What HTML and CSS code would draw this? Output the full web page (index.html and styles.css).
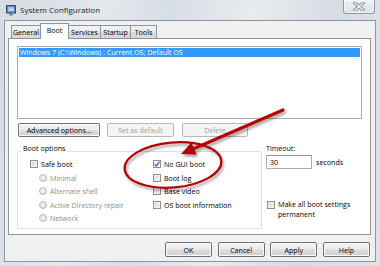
FILE: index.html
```html
<!doctype html>
<html lang="en">
  <head>
    <meta charset="UTF-8" />
    <title>System Configuration</title>
    <link rel="stylesheet" href="styles.css">
  </head>
  <body>
    <div class="window">
      <div class="title-bar">
        <svg class="app-icon" width="11" height="11" viewBox="0 0 11 11">
          <rect x="0.5" y="0.5" width="9" height="7.5" fill="#5e7fc4" stroke="#3d4b66" />
          <rect x="2" y="2" width="6" height="4.5" fill="#9fc0f0" />
          <path d="M3 6 L5 4 L8 5" fill="none" stroke="#ffffff" stroke-width="0.8" />
          <rect x="3" y="8.5" width="4" height="2" fill="#7d8796" />
        </svg>
        <span class="title">System Configuration</span>
        <div class="close-btn">
          <svg width="12" height="9" viewBox="0 0 12 9">
            <path d="M2 1 L10 8 M10 1 L2 8" stroke="#8a8f96" stroke-width="3.2" stroke-linecap="square" />
            <path d="M2 1 L10 8 M10 1 L2 8" stroke="#f4f5f6" stroke-width="1.4" stroke-linecap="square" />
          </svg>
        </div>
      </div>

      <div class="client">
        <div class="tab-strip">
          <div class="tab tab-general">General</div>
          <div class="tab tab-boot active">Boot</div>
          <div class="tab tab-services">Services</div>
          <div class="tab tab-startup">Startup</div>
          <div class="tab tab-tools">Tools</div>
        </div>

        <div class="tab-panel">
          <div class="os-list">
            <div class="os-entry selected">Windows 7 (C:\Windows) : Current OS; Default OS</div>
          </div>

          <div class="entry-actions">
            <button class="btn btn-advanced">Advanced options...</button>
            <button class="btn btn-default" disabled>Set as default</button>
            <button class="btn btn-delete" disabled>Delete</button>
          </div>

          <div class="boot-settings">
            <div class="group">
              <div class="group-title">Boot options</div>
              <div class="group-cols">
                <div class="col col-left">
                  <div class="row"><span class="box"></span>Safe boot</div>
                  <div class="row sub disabled"><span class="radio"></span>Minimal</div>
                  <div class="row sub disabled"><span class="radio"></span>Alternate shell</div>
                  <div class="row sub disabled"><span class="radio"></span>Active Directory repair</div>
                  <div class="row sub disabled"><span class="radio"></span>Network</div>
                </div>
                <div class="col col-right">
                  <div class="row">
                    <span class="box checked">
                      <svg width="6" height="6" viewBox="0 0 6 6"><path d="M0.8 3.2 L2.4 5 L5.4 0.6" fill="none" stroke="#2a4fa8" stroke-width="1.1" /></svg>
                    </span>No GUI boot
                  </div>
                  <div class="row"><span class="box"></span>Boot log</div>
                  <div class="row"><span class="box"></span>Base video</div>
                  <div class="row"><span class="box"></span>OS boot information</div>
                </div>
              </div>
            </div>

            <div class="side">
              <div class="side-label">Timeout:</div>
              <div class="timeout-row">
                <div class="text-input">30</div>
                <span>seconds</span>
              </div>
              <div class="permanent">
                <span class="box"></span>
                <span class="permanent-text">Make all boot settings permanent</span>
              </div>
            </div>
          </div>
        </div>

        <div class="dialog-buttons">
          <button class="btn btn-dialog">OK</button>
          <button class="btn btn-dialog">Cancel</button>
          <button class="btn btn-dialog">Apply</button>
          <button class="btn btn-dialog">Help</button>
        </div>
      </div>

      <!-- annotation drawn over the dialog -->
      <svg class="callout" width="380" height="266" viewBox="0 0 380 266">
        <defs>
          <filter id="shadow" x="-20%" y="-40%" width="140%" height="180%">
            <feDropShadow dx="1.5" dy="2.5" stdDeviation="1.2" flood-color="#000" flood-opacity="0.35" />
          </filter>
        </defs>
        <g filter="url(#shadow)">
          <ellipse cx="173" cy="165" rx="48.5" ry="22.5" transform="rotate(-5 173 165)" fill="none" stroke="#b40000" stroke-width="2.2" />
          <line x1="283" y1="110" x2="193" y2="149" stroke="#b40000" stroke-width="3.2" stroke-linecap="round" />
          <polygon points="181,154 191.4,142.4 196.6,154.4" fill="#b40000" />
        </g>
      </svg>
    </div>
  </body>
</html>
```

FILE: styles.css
```css
* {
  box-sizing: border-box;
}

body {
  margin: 0;
  width: 380px;
  height: 266px;
  overflow: hidden;
  font-family: "Open Sans", "Noto Sans", sans-serif;
  font-size: 7.1px;
  color: #000000;
}

.window {
  position: relative;
  width: 380px;
  height: 266px;
  display: flex;
  flex-direction: column;
  background: linear-gradient(100deg, #d5dbe2 0%, #e4e8ed 25%, #d8dee5 40%, #e8ebef 60%, #d6dce3 80%, #dfe3e8 100%);
}

/* title bar */
.title-bar {
  height: 20px;
  display: flex;
  align-items: flex-start;
  padding-left: 6px;
}

.app-icon {
  margin-top: 5px;
}

.title {
  margin-left: 3px;
  margin-top: 5px;
  font-size: 8px;
  line-height: 10px;
  color: #1e1e1e;
}

.close-btn {
  margin-left: auto;
  margin-right: 5px;
  width: 32px;
  height: 14px;
  border: 1px solid #8f98a3;
  border-top: none;
  border-radius: 0 0 3px 3px;
  background: linear-gradient(#eef0f2, #dde1e5);
  box-shadow: inset 0 0 0 1px rgba(255, 255, 255, 0.6);
  display: flex;
  justify-content: center;
  align-items: center;
}

/* client area */
.client {
  flex: 1;
  margin: 0 4px 4px;
  border: 1px solid #8d97a2;
  background: #f0f0f0;
  display: flex;
  flex-direction: column;
  padding: 0 4px 4px 3px;
}

.tab-strip {
  height: 17px;
  display: flex;
  align-items: flex-end;
  padding-left: 3px;
}

.tab {
  height: 13px;
  line-height: 12px;
  text-align: center;
  border: 1px solid #8f939a;
  border-bottom: none;
  margin-right: -1px;
  background: linear-gradient(#f2f2f2, #e9e9e9 50%, #dedede 52%, #d6d6d6);
}

.tab-general { width: 30px; }
.tab-boot { width: 29px; }
.tab-services { width: 33px; }
.tab-startup { width: 31px; }
.tab-tools { width: 27px; }

.tab.active {
  position: relative;
  z-index: 1;
  height: 16px;
  line-height: 13px;
  margin-bottom: -1px;
  background: #ffffff;
}

.tab-panel {
  height: 197px;
  border: 1px solid #8f939a;
  background: #ffffff;
  padding: 7px 8px 0 8px;
}

.os-list {
  height: 73px;
  border: 1px solid #a9afb8;
  padding: 1px;
}

.os-entry {
  height: 9px;
  line-height: 9px;
  padding-left: 1px;
}

.os-entry.selected {
  background: #3399ff;
  color: #ffffff;
}

/* buttons */
.btn {
  font: inherit;
  color: #000000;
  padding: 0;
  border: 1px solid #707070;
  border-radius: 2px;
  background: linear-gradient(#f3f3f3 0%, #ebebeb 48%, #dddddd 52%, #cfcfcf 100%);
  box-shadow: inset 0 0 0 1px #fbfbfb;
}

.btn:disabled {
  color: #a3a3a3;
  border-color: #b5b9bd;
  background: #f4f4f4;
  box-shadow: none;
}

.entry-actions {
  display: flex;
  margin-top: 4px;
  padding-left: 1px;
}

.entry-actions .btn {
  height: 14px;
}

.btn-advanced { width: 82px; }
.btn-default { width: 67px; margin-left: 7px; }
.btn-delete { width: 66px; margin-left: 8px; }

/* boot options */
.boot-settings {
  display: flex;
  align-items: flex-start;
  margin-top: 7px;
}

.group {
  width: 245px;
  margin-top: 7px;
  border: 1px solid #d5dfe5;
  border-radius: 2px;
  padding-bottom: 3px;
}

.group-title {
  display: table;
  margin: -8.5px 0 4.75px 3px;
  padding: 0 2px;
  line-height: 9px;
  background: #ffffff;
}

.group-cols {
  display: flex;
  padding-left: 12px;
}

.col-left {
  width: 123px;
}

.row {
  height: 13.5px;
  display: flex;
  align-items: center;
  gap: 3px;
}

.row.sub {
  padding-left: 9px;
}

.row.disabled {
  color: #8e8e8e;
}

.box {
  flex: none;
  width: 8px;
  height: 8px;
  border: 1px solid #8e9093;
  background: linear-gradient(135deg, #d6d6d6, #f4f4f4);
  box-shadow: inset 0 0 0 1px #f0f0f0;
  display: flex;
  justify-content: center;
  align-items: center;
}

.box.checked {
  background: #f6f6f6;
}

.radio {
  flex: none;
  width: 8px;
  height: 8px;
  border-radius: 50%;
  border: 1px solid #bcbcbc;
  background: radial-gradient(circle at 40% 40%, #f4f4f4, #d9d9d9);
}

.side {
  margin-left: 4px;
  width: 96px;
}

.side-label {
  line-height: 9px;
}

.timeout-row {
  display: flex;
  align-items: center;
  gap: 4px;
  margin-top: 2px;
}

.text-input {
  width: 46px;
  height: 14px;
  line-height: 12px;
  padding-left: 3px;
  border: 1px solid #abadb3;
  border-top-color: #8f949c;
  background: #ffffff;
}

.permanent {
  display: flex;
  align-items: flex-start;
  gap: 3px;
  margin-top: 30px;
  padding-left: 1px;
}

.permanent .box {
  margin-top: 2px;
}

.permanent-text {
  line-height: 10px;
}

/* dialog buttons */
.dialog-buttons {
  display: flex;
  justify-content: flex-end;
  gap: 5.7px;
  margin-top: 7px;
  padding-right: 1px;
}

.btn-dialog {
  width: 47px;
  height: 15px;
}

.callout {
  position: absolute;
  top: 0;
  left: 0;
  pointer-events: none;
}
```
